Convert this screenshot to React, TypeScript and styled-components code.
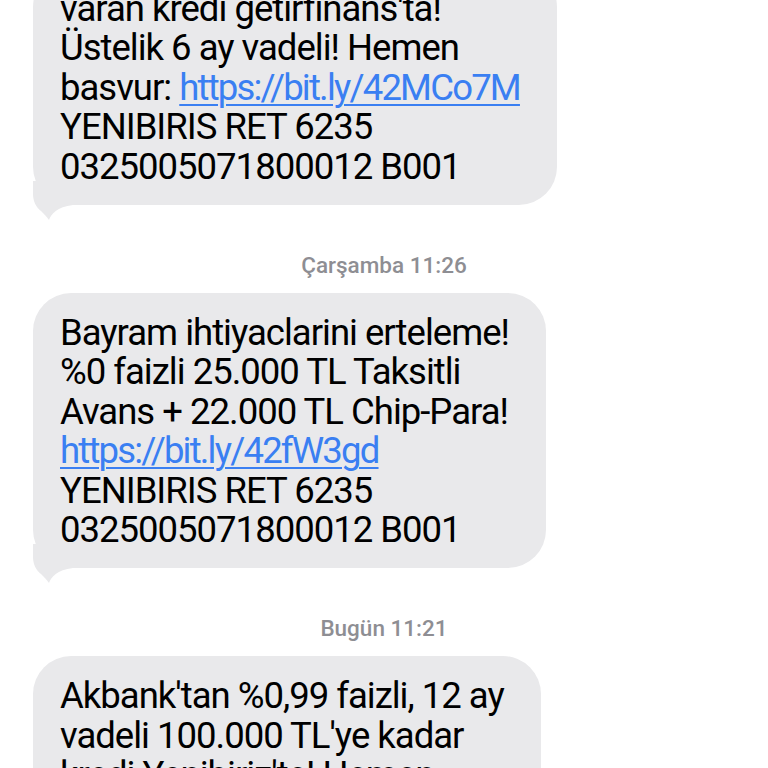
import React from "react";
import styled, { createGlobalStyle } from "styled-components";

const Global = createGlobalStyle`
  html, body { margin: 0; padding: 0; background: #ffffff; }
  body { overflow: hidden; font-family: Roboto, "Noto Sans", "Liberation Sans", sans-serif; }
`;

const Thread = styled.div`
  display: flex;
  flex-direction: column;
  align-items: flex-start;
  width: 768px;
  height: 768px;
  overflow: hidden;
  padding: 0 0 0 33px;
  box-sizing: border-box;
`;

const Bubble = styled.div<{ $first?: boolean }>`
  position: relative;
  background: #e9e9eb;
  border-radius: 38px;
  padding: 20px 37px 19px 27px;
  margin-top: ${(p) => (p.$first ? "-31px" : "0")};
  color: #000;
  font-size: 36.5px;
  letter-spacing: -1px;
  line-height: 39.4px;
  white-space: nowrap;
`;

const Line = styled.div`
  display: block;
`;

const Link = styled.span`
  color: #3a7ff2;
  letter-spacing: -1.8px;
  text-decoration: underline;
  text-decoration-thickness: 2px;
  text-underline-offset: 4px;
`;

const Tail = styled.svg`
  position: absolute;
  left: 0;
  bottom: -16px;
  width: 40px;
  height: 40px;
  overflow: visible;
`;

const Stamp = styled.div`
  align-self: stretch;
  margin-left: -33px;
  text-align: center;
  color: #8e8e93;
  font-size: 22.5px;
  font-weight: 500;
  line-height: 24px;
  padding: 48px 0 16px;
`;

const BubbleTail = () => (
  <Tail viewBox="0 0 40 40">
    <path d="M0 0 V13 C0 20 3 26 8 30 C11 33 14 36 16 39 C18 33 24 26 40 24 V0 Z" fill="#e9e9eb" />
  </Tail>
);

type Msg = { lines: React.ReactNode[]; first?: boolean };

const Message = ({ lines, first }: Msg) => (
  <Bubble $first={first}>
    {lines.map((l, i) => (
      <Line key={i}>{l}</Line>
    ))}
    <BubbleTail />
  </Bubble>
);

export default function App() {
  return (
    <>
      <Global />
      <Thread>
        <Message
          first
          lines={[
            "varan kredi getirfinans'ta!",
            "Üstelik 6 ay vadeli! Hemen",
            <>basvur: <Link>https://bit.ly/42MCo7M</Link></>,
            "YENIBIRIS RET 6235",
            "0325005071800012 B001",
          ]}
        />
        <Stamp>Çarşamba 11:26</Stamp>
        <Message
          lines={[
            "Bayram ihtiyaclarini erteleme!",
            "%0 faizli 25.000 TL Taksitli",
            "Avans + 22.000 TL Chip-Para!",
            <Link>https://bit.ly/42fW3gd</Link>,
            "YENIBIRIS RET 6235",
            "0325005071800012 B001",
          ]}
        />
        <Stamp>Bugün 11:21</Stamp>
        <Message
          lines={[
            "Akbank'tan %0,99 faizli, 12 ay",
            "vadeli 100.000 TL'ye kadar",
            "kredi Yenibiriz'te! Hemen",
          ]}
        />
      </Thread>
    </>
  );
}
